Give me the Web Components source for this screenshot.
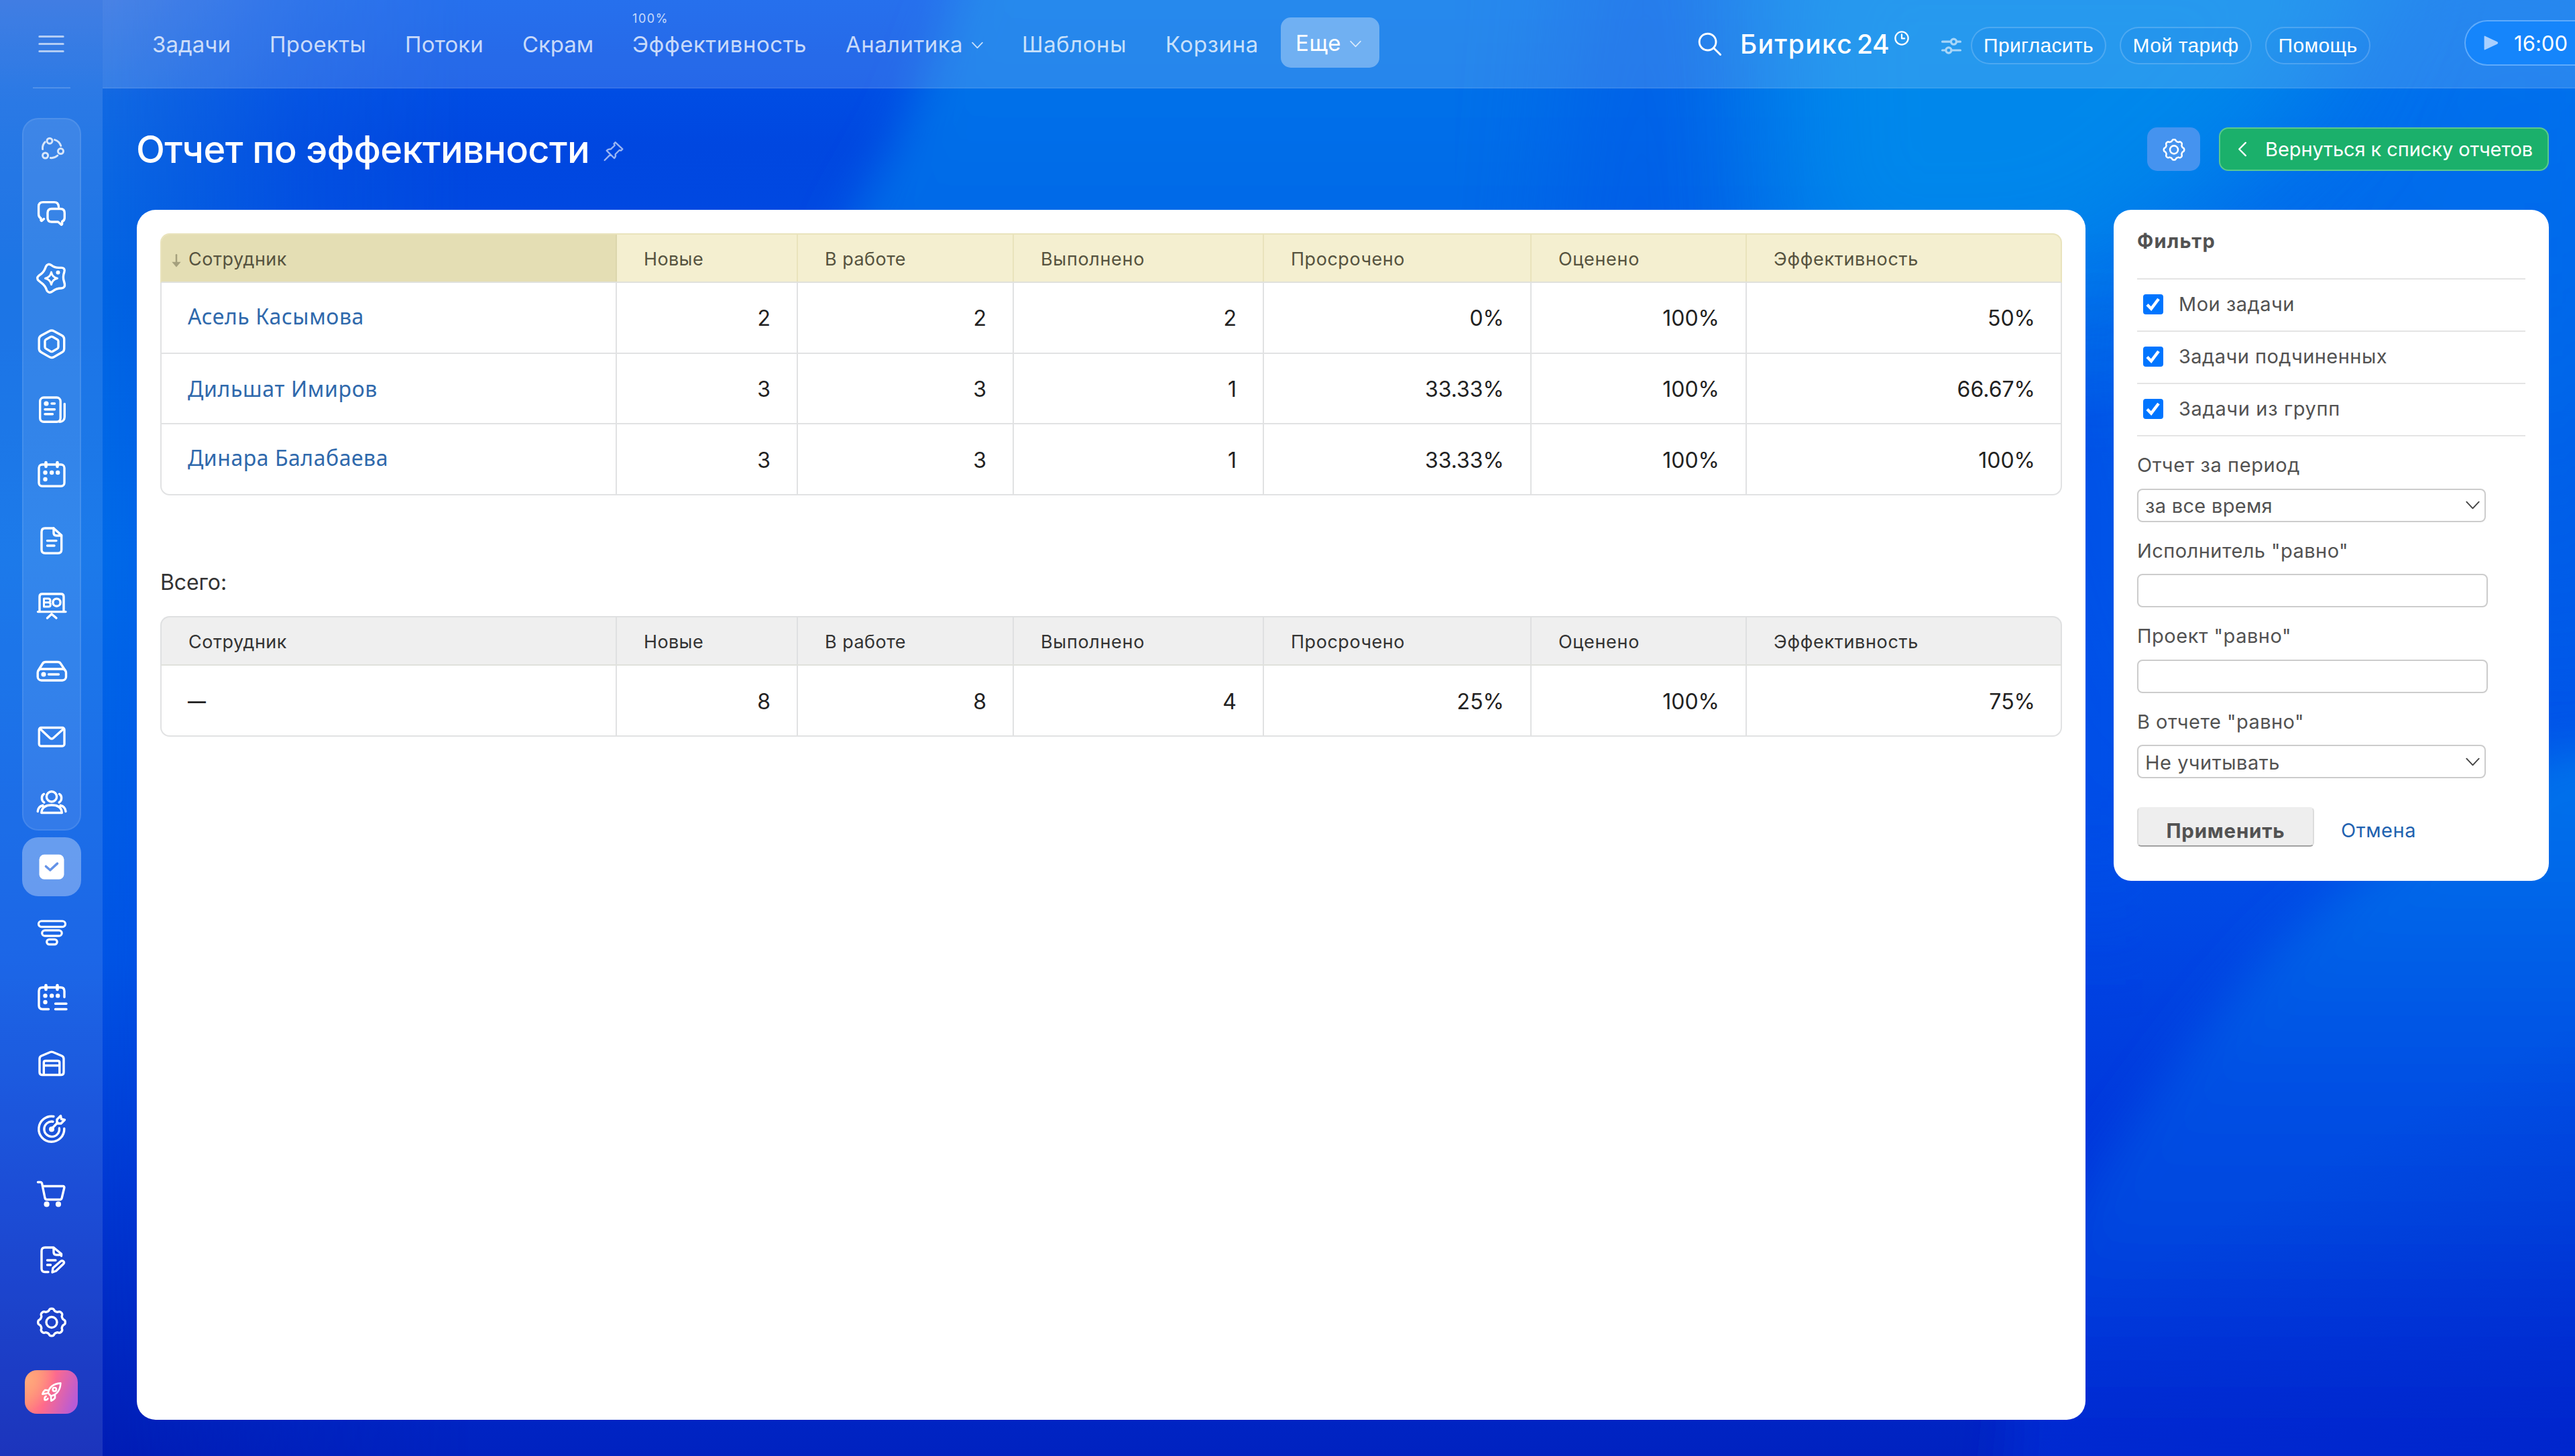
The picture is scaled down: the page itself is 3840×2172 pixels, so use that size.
<!DOCTYPE html>
<html lang="ru">
<head>
<meta charset="utf-8">
<title>Отчет по эффективности</title>
<style>
  html, body { margin: 0; height: 100%; overflow: hidden; }

  body {
    font-family: Inter, "Liberation Sans", sans-serif;
    background: #0048e0;
  }
</style>
</head>
<body>

<app-shell>
  <side-bar slot="side"></side-bar>
  <top-bar slot="top"></top-bar>
  <page-title slot="title">Отчет по эффективности</page-title>

  <report-card slot="main">
    <report-table id="main-table" sorted></report-table>
    <fit-text class="total" w="99">Всего:</fit-text>
    <report-table id="total-table"></report-table>
  </report-card>

  <filter-card slot="filter">
    <filter-check w="173">Мои задачи</filter-check>
    <filter-check w="311">Задачи подчиненных</filter-check>
    <filter-check w="241">Задачи из групп</filter-check>
    <filter-field slot="fields" label="Отчет за период" w="243" value="за все время" vw="190"></filter-field>
    <filter-field slot="fields" label='Исполнитель "равно"' w="315"></filter-field>
    <filter-field slot="fields" label='Проект "равно"' w="230"></filter-field>
    <filter-field slot="fields" label='В отчете "равно"' w="249" value="Не учитывать" vw="201"></filter-field>
  </filter-card>
</app-shell>

<script>
// Closed outline of an eight-toothed cog
function cogPath (cx, cy, r, depth) {
  let d = "";
  for (let i = 0; i < 160; i++) {
    const a  = i / 160 * Math.PI * 2;
    const rr = r + depth * Math.tanh(1.6 * Math.cos(8 * a));
    d += (i ? "L" : "M") + (cx + rr * Math.sin(a)).toFixed(2) + " " + (cy - rr * Math.cos(a)).toFixed(2);
  }
  return d + "Z";
}

const dot = (x, y, r=3.2) => `<ellipse cx="${x}" cy="${y}" rx="${r}" ry="${r}" fill="currentColor" stroke="none"/>`;

const icons = {
  loop: `<g stroke-width="3"><circle cx="21" cy="13.2" r="4"/><circle cx="37.5" cy="28.6" r="4"/><circle cx="14.6" cy="35" r="4"/>
    <path d="M10.6 25.6C10 21 11.3 17.6 14.2 14.8M28.6 11.6C33 12.8 36.2 16 37.8 20.6M22.4 38.6C26.4 39 29.8 37.8 32.8 35"/></g>`,
  chat: `<path d="M34.5 14.5C34.2 10 32 7.6 28 7.6H11C6.8 7.6 4.6 10 4.6 14V25.5C4.6 28.5 5.6 30.5 8 31.5V34.5C8 35.5 9 35.8 9.7 35.1L12.5 32.6"/>
    <path d="M24 17.5H37C41 17.5 43.3 19.6 43.3 23.5V31C43.3 33.8 42 35.6 39.6 36.4V40.2C39.6 41.2 38.6 41.5 37.9 40.8L33.6 37H24C20 37 18 35 18 31V23.5C18 19.6 20 17.5 24 17.5Z"/>`,
  spark: `<path d="M15.5 6.5C17 3 20.5 2.2 23.5 4.6C27 7.8 30 8.6 36 8.4H38.6C42.6 8.4 44.2 11.5 42.8 15C41.2 19.5 40.8 24 42.4 28.5L43.4 32.5C44.2 36.5 42 39 38.5 39C33 39 29.5 40 25.8 43.3C22 46.6 18 45.4 16.5 41.5C15 37 13 34.2 9 31.2L4.5 27.5C2.2 25.5 2.2 22.5 4.4 20.7L9 17.2C13 14 14 11 15.5 6.5Z"/>
    <path d="M23.5 15C24.5 20.5 27 23 32.5 24.2C27 25.4 24.5 28 23.5 33.5C22.5 28 20 25.4 14.5 24.2C20 23 22.5 20.5 23.5 15Z" stroke-width="3"/>${dot(33.5, 15.4, 3)}`,
  hexagon: `<path d="M20.5 5C22.7 3.7 25.3 3.7 27.5 5L39.5 11.6C41.6 12.8 42.7 14.6 42.7 17V31.2C42.7 33.6 41.6 35.4 39.5 36.6L27.5 43.4C25.3 44.7 22.7 44.7 20.5 43.4L8.5 36.6C6.4 35.4 5.2 33.6 5.2 31.2V17C5.2 14.6 6.4 12.8 8.5 11.6Z"/>
    <path d="M22.5 13.5Q24 12.7 25.5 13.5L32.5 17.4Q34 18.3 34 20V28.5Q34 30.2 32.5 31.1L25.5 35.2Q24 36 22.5 35.2L15.5 31.1Q14 30.2 14 28.5V20Q14 18.3 15.5 17.4Z"/>`,
  news: `<rect x="6.7" y="6" width="30.5" height="36.3" rx="5.5"/><path d="M43.3 15.5V35C43.3 39.5 40 42.3 36 42.3M24 15H28.5M14 23.8H28.5M14 30.8H25.5"/>${dot(16, 15, 3.6)}`,
  calendar: `<rect x="5" y="9" width="38" height="32.3" rx="5"/><path d="M15.5 6V12M32.5 6V12" stroke-width="4.6"/>${dot(14.5, 21)}${dot(24.2, 21)}${dot(33.2, 21)}${dot(14.5, 31)}`,
  doc: `<path d="M14 6H27L38.7 16.5V38Q38.7 43.3 33.5 43.3H14.5Q9 43.3 9 38V11.5Q9 6 14 6Z"/><path d="M27 6V13Q27 17 31 17H38.5M17.5 24.6H31M17.5 32H28"/>`,
  board: `<path d="M6 33V11Q6 7 10 7H38Q42 7 42 11V33M3.5 33.6H45M17.5 43L24 37L31 43"/><path d="M12.500 14H19Q22 14 22 17Q22 19.5 19.5 19.8Q22.300 20 22.300 23Q22.300 26 19.500 26H12.500ZM12.500 19.800H20" stroke-width="3"/><circle cx="31.5" cy="19.7" r="5.6"/>`,
  drive: `<rect x="3.2" y="21" width="42.3" height="17" rx="5.5"/><path d="M4 23.5L10.5 13Q12 10.5 15 10.5H33Q36 10.5 37.5 13L44.5 23.5M19.5 29H34.5"/>${dot(12, 29, 3.6)}`,
  mail: `<rect x="5.3" y="10.5" width="37.7" height="27.5" rx="3"/><path d="M6.5 12L21.5 26Q24 28.2 26.5 26L42 12"/>`,
  people: `<circle cx="24" cy="16.4" r="7.6"/><path d="M8.8 40.5C9.3 32.5 14.5 29 24 29S38.8 32.5 39.3 40.5ZM12.5 12.5C8.5 14.5 8 22 12.8 25M35.5 12.5C39.5 14.5 40 22 35.2 25M3.2 38.5C3.6 33.5 6.5 30.5 11 29.5M45 38.5C44.5 33.5 41.5 30.5 37 29.5"/>`,
  tasks: `<rect x="5.5" y="5.7" width="37" height="37" rx="7.5" fill="currentColor" stroke="none"/><path d="M15.5 23.5L21.8 29L32.5 19.2" stroke="#6493e8" stroke-width="3.6"/>`,
  filter: `<g stroke-width="3.2"><rect x="4.5" y="7" width="40" height="8.6" rx="4.3"/><rect x="9.7" y="20.8" width="29.5" height="8.4" rx="4.2"/><rect x="16.7" y="34.300" width="15.5" height="7.6" rx="3.8"/></g>`,
  schedule: `<path d="M19.5 41.5H10.5Q5 41.5 5 36V14.5Q5 9 10.5 9H37.5Q43 9 43 14.5V23.5M29.5 33.2H46M29.5 41.5H46"/><path d="M15.5 6V12M32.5 6V12" stroke-width="4.6"/>${dot(14.5, 21.4)}${dot(24.2, 21.4)}${dot(33.2, 21.4)}${dot(14.5, 31)}`,
  warehouse: `<path d="M6 17.500Q6 14.200 9 13L22 7.500Q24 6.700 26 7.500L39 13Q42 14.200 42 17.500V37.500Q42 41.500 38.500 41.500H9.500Q6 41.500 6 37.500ZM12.300 41V23Q12.300 20.500 15 20.500H33Q35.800 20.500 35.800 23V41M12.300 27.500H35.800"/>`,
  target: `<path d="M27 5.5A19 19 0 1 0 42.8 23.5M26 13.2A11.3 11.3 0 1 0 35.4 23M24 24L33 14.5M32 10L37.5 4.5L38.5 9.5L43.5 10.5L38 16H32Z"/>${dot(24, 24.5, 4)}`,
  cart: `<path d="M3.5 6.5H7.5Q9 6.5 9.5 8L14 30Q14.6 32.5 17 32.5H36.5Q38.5 32.5 39.2 30L42.8 15Q43.2 12.5 41 12.5H10.5"/>${dot(16.6, 39.4, 4.1)}${dot(34, 39.4, 4.1)}`,
  sign: `<path d="M19 42.5H14Q9 42.5 9 37.5V11Q9 6 14 6H27L38.5 15.5V18.5M27 6V13Q27 17 31 17H38M17.5 25H30M17.5 32H22.5M25 43L26 36.5L37.5 26.5Q39.5 25 41.5 26.5Q43.5 28.5 41.5 30.5L30.5 41Z"/>`,
  gear: `<path d="${cogPath(24, 24.5, 18.7, 1.7)}"/><circle cx="24" cy="24.5" r="8"/>`,
  rocket: `<g stroke-width="4"><path d="M16 27C18 15 27 6.5 44 5C43.5 21 35 31 22.5 34ZM16.5 21L9 20.5Q4 25 3.5 29.5L13 28M31.5 31V38Q27.5 43 23 44.5L22.5 35M11.5 34.5C8 36 8 40 8.5 42.5C12 43 14.5 42 15.5 39.5"/><circle cx="30.5" cy="19" r="4"/></g>`,
  burger: `<path d="M8 14H40M8 24H40M8 34H40"/>`,
  search: `<circle cx="20" cy="20" r="17"/><path d="M32.500 32.500L46 46"/>`,
  clock: `<circle cx="24" cy="24" r="21"/><path d="M24 12V25H33"/>`,
  sliders: `<path d="M1 14H22M38 14H47M1 36H9M26 36H47"/><circle cx="30" cy="14" r="7"/><circle cx="17" cy="36" r="7"/>`,
  play: `<path d="M5 4L43 22Q46 24 43 26L5 44Z" fill="currentColor"/>`,
  down: `<path d="M3 13L24 35L45 13"/>`,
  back: `<path d="M33 4L13 24L33 44"/>`,
  pin: `<path d="M28 5L44 20L40.5 23.5L37 22.5L28 31.5C29 35 28 38.5 25.5 40.5L8.5 23.5C11 20.5 14.5 20 17.5 20.5L26.5 12L25 8ZM17 32L4 45"/>`,
  sort: `<path d="M24 3V34" stroke-width="6"/><path d="M8 28H40L24 47Z" fill="currentColor" stroke="none"/>`,
};

class UiIcon extends HTMLElement {
  connectedCallback () {
    const width = this.getAttribute("stroke") || 3.4;
    this.attachShadow({mode: "open"}).innerHTML = `
      <style>
        :host { display: block; flex: none; width: 48px; height: 48px; }
        svg { display: block; width: 100%; height: 100%; overflow: visible; }
      </style>
      <svg viewBox="0 0 48 48" fill="none" stroke="currentColor" stroke-width="${width}"
        stroke-linecap="round" stroke-linejoin="round">${icons[this.getAttribute("name")]}</svg>`;
  }
}

// One line of text, tracked so that it takes up exactly `w` pixels
class FitText extends HTMLElement {
  connectedCallback () {
    this.attachShadow({mode: "open"}).innerHTML = `
      <style>
        :host { display: block; flex: none; white-space: nowrap; }
        span { display: inline-block; }
      </style>
      <span><slot></slot></span>`;

    const width = Number(this.getAttribute("w"));
    if (!width)
      return;

    const span = this.shadowRoot.querySelector("span");
    const gap  = (width - span.getBoundingClientRect().width) / this.textContent.length;
    span.style.letterSpacing = gap.toFixed(3) + "px";
  }
}

class AppShell extends HTMLElement {
  connectedCallback () {
    this.attachShadow({mode: "open"}).innerHTML = `
      <style>
        :host {
          display: grid;
          grid-template-columns: 153px 1fr;
          width: 3840px;
          height: 2172px;
          overflow: hidden;
          position: relative;
          z-index: 0;
        }
        .backdrop, .glow { position: absolute; inset: 0; z-index: -1; }
        .glow {
          right: auto;
          width: 700px;
          background: linear-gradient(#2a6ee0, #1069e2 7%, #0064e2 20%, #006ae8 38%, #0054e4 66%, #0038d2 82%, #001cb4);
          -webkit-mask-image: linear-gradient(to right, #000 150px, #000a 280px, #0004 450px, transparent);
          mask-image: linear-gradient(to right, #000 150px, #000a 280px, #0004 450px, transparent);
        }
        .page { display: flex; flex-direction: column; min-width: 0; }
        .columns { display: flex; align-items: flex-start; gap: 42px; padding-left: 51px; }
      </style>
      <svg class="backdrop" width="3840" height="2172" viewBox="0 0 3840 2172" preserveAspectRatio="none">
        <defs>
          <linearGradient id="base" x1="0" y1="0" x2="0" y2="1">
            <stop offset="0" stop-color="#0057ea"/><stop offset=".1" stop-color="#0047e0"/>
            <stop offset=".45" stop-color="#0050e8"/><stop offset=".6" stop-color="#004ce6"/>
            <stop offset=".8" stop-color="#0034da"/><stop offset="1" stop-color="#0022c0"/>
          </linearGradient>
          <linearGradient id="top" x1="0" y1="0" x2="0" y2="1">
            <stop offset="0" stop-color="#0078ea"/><stop offset="1" stop-color="#0060e6"/>
          </linearGradient>
          <linearGradient id="fold" x1="0" y1="0" x2="0" y2="1">
            <stop offset="0" stop-color="#0074ec"/><stop offset=".2" stop-color="#0064e8"/>
            <stop offset=".4" stop-color="#0051e4"/><stop offset=".6" stop-color="#0046df"/>
            <stop offset=".75" stop-color="#0035d9"/><stop offset=".87" stop-color="#0029d2"/>
          </linearGradient>
          <linearGradient id="rim" x1="0" y1="0" x2="0" y2="1">
            <stop offset="0" stop-color="#0074ee"/><stop offset=".5" stop-color="#0066ea"/>
            <stop offset="1" stop-color="#006aea" stop-opacity=".2"/>
          </linearGradient>
          <linearGradient id="corner" x1=".3" y1="0" x2="1" y2="1">
            <stop offset=".35" stop-color="#0022c8" stop-opacity="0"/><stop offset="1" stop-color="#0022c8" stop-opacity=".55"/>
          </linearGradient>
          <filter id="soft" x="-50%" y="-50%" width="200%" height="200%"><feGaussianBlur stdDeviation="34"/></filter>
          <filter id="softer" x="-50%" y="-50%" width="200%" height="200%"><feGaussianBlur stdDeviation="90"/></filter>
        </defs>
        <rect width="3840" height="2172" fill="url(#base)"/>
        <path d="M1460 -100L1400 60L1350 180L1260 340L1200 600H4000V-100Z" fill="url(#top)" filter="url(#soft)"/>
        <path d="M2380 -200H2540L2560 400L2520 700H2300Z" fill="#0055e6" opacity=".6" filter="url(#softer)"/>
        <path d="M3560 -60L3500 150L3200 320L3140 600L3200 1100H4000V-60Z" fill="url(#rim)" filter="url(#softer)"/>
        <path d="M2640 -160H3560L3440 150L3260 330L3100 440H2660Z" fill="#008cec" opacity=".85" filter="url(#softer)"/>
        <path d="M3090 520H3160V1350H3090Z" fill="#004fe8" opacity=".8" filter="url(#softer)"/>
        <path d="M4000 1120H3800L3640 1235L3502 1318L3390 1414L3313 1498L3245 1582L3177 1672L3119 1751L3020 1940L2980 2300H4000Z" fill="url(#fold)" filter="url(#soft)"/>
        <rect x="3000" y="1500" width="840" height="672" fill="url(#corner)"/>
      </svg>
      <div class="glow"></div>
      <slot name="side"></slot>
      <div class="page">
        <slot name="top"></slot>
        <slot name="title"></slot>
        <div class="columns">
          <slot name="main"></slot>
          <slot name="filter"></slot>
        </div>
      </div>`;
  }
}

class SideBar extends HTMLElement {
  connectedCallback () {
    const item = name => `<div class="item"><ui-icon name="${name}"></ui-icon></div>`;

    this.attachShadow({mode: "open"}).innerHTML = `
      <style>
        :host {
          display: flex;
          flex-direction: column;
          align-items: center;
          color: white;
          background: #ffffff1c;
        }
        .burger { height: 130px; display: grid; place-items: center; opacity: .62; }
        .burger ui-icon { width: 53px; height: 53px; }
        hr { width: 56px; height: 2px; margin: 0 0 44px; border: 0; background: #ffffff2c; }
        .group {
          box-sizing: border-box;
          width: 88px;
          height: 1063px;
          border: 2px solid #ffffff16;
          border-radius: 24px;
          background: #ffffff1a;
        }
        .group > :first-child { height: 86px; margin-bottom: 5px; opacity: .8; }
        .item { height: 97.6px; display: grid; place-items: center; }
        .group, .active { flex: none; }
        .active {
          width: 88px;
          height: 88px;
          margin: 10px 0 5px;
          border-radius: 24px;
          background: #ffffff55;
        }
        .rocket {
          width: 79px;
          height: 65px;
          margin-top: 28px;
          display: grid;
          place-items: center;
          border-radius: 18px;
          background: radial-gradient(circle at 0 20%, #ffab7c, transparent 50%),
            linear-gradient(110deg, #ff8878 20%, #ff6b8b 45%, #b85bd6 90%);
        }
        .rocket ui-icon { width: 32px; height: 32px; }
      </style>
      <div class="burger"><ui-icon name="burger" stroke="2.8"></ui-icon></div>
      <hr>
      <div class="group">${["loop", "chat", "spark", "hexagon", "news", "calendar", "doc", "board", "drive", "mail", "people"].map(item).join("")}</div>
      <div class="item active"><ui-icon name="tasks"></ui-icon></div>
      ${["filter", "schedule", "warehouse", "target", "cart", "sign"].map(item).join("")}
      <div class="item" style="height: 88px"><ui-icon name="gear"></ui-icon></div>
      <div class="rocket"><ui-icon name="rocket"></ui-icon></div>`;
  }
}

class TopBar extends HTMLElement {
  connectedCallback () {
    this.attachShadow({mode: "open"}).innerHTML = `
      <style>
        :host {
          box-sizing: border-box;
          flex: none;
          height: 132px;
          padding-left: 45px;
          display: flex;
          align-items: center;
          color: white;
          background: #ffffff26;
          border-bottom: 2px solid #ffffff12;
        }
        nav { display: flex; align-items: center; font-size: 33px; color: #ffffffc0; }
        nav > div { position: relative; display: flex; align-items: center; padding: 2px 29px 0; }
        .counter { position: absolute; left: 29px; top: -26px; font-size: 18px; line-height: 20px; }
        nav ui-icon { width: 17px; height: 17px; margin: 2px 0 0 13px; }
        nav > .more {
          height: 73px;
          margin: -4px 0 0 4px;
          padding: 2px 27px 0 22px;
          border-radius: 15px;
          color: white;
          background: #ffffff58;
        }
        .more ui-icon { opacity: .75; }
        .search { width: 35px; height: 35px; margin-left: 475px; }
        .brand { display: flex; margin-left: 28px; font-size: 39px; font-weight: 500; gap: 6px; padding-top: 1px; }
        .clock { width: 22px; height: 22px; margin: -16px 49px 0 8px; }
        .sliders { width: 28px; height: 28px; margin: 6px 15px 0 0; opacity: .6; }
        .pill {
          box-sizing: border-box;
          height: 56px;
          margin: 6px 20px 0 0;
          display: grid;
          place-items: center;
          border: 2px solid #ffffff30;
          border-radius: 28px;
          font: 30px "Liberation Sans", sans-serif;
          background: #2080ea22;
        }
        .timer {
          box-sizing: border-box;
          flex: none;
          width: 210px;
          height: 68px;
          margin: -2px -60px 0 120px;
          padding-left: 26px;
          display: flex;
          align-items: center;
          gap: 23px;
          border: 2px solid #ffffff50;
          border-radius: 34px;
          font-size: 31px;
          background: #1585fb;
        }
        .timer ui-icon { width: 23px; height: 26px; color: #a9d0ff; }
      </style>
      <nav>
        <div><fit-text w="117">Задачи</fit-text></div>
        <div><fit-text w="144">Проекты</fit-text></div>
        <div><fit-text w="117">Потоки</fit-text></div>
        <div><fit-text w="106">Скрам</fit-text></div>
        <div><fit-text class="counter" w="54">100%</fit-text><fit-text w="260">Эффективность</fit-text></div>
        <div><fit-text w="175">Аналитика</fit-text><ui-icon name="down" stroke="5"></ui-icon></div>
        <div><fit-text w="156">Шаблоны</fit-text></div>
        <div><fit-text w="139">Корзина</fit-text></div>
        <div class="more"><fit-text w="68">Еще</fit-text><ui-icon name="down" stroke="4.5"></ui-icon></div>
      </nav>
      <ui-icon class="search" name="search" stroke="4"></ui-icon>
      <div class="brand"><fit-text w="168">Битрикс</fit-text><fit-text w="48">24</fit-text></div>
      <ui-icon class="clock" name="clock" stroke="5"></ui-icon>
      <ui-icon class="sliders" name="sliders" stroke="5.5"></ui-icon>
      <div class="pill" style="width: 202px"><fit-text w="164">Пригласить</fit-text></div>
      <div class="pill" style="width: 197px"><fit-text w="158">Мой тариф</fit-text></div>
      <div class="pill" style="width: 157px"><fit-text w="118">Помощь</fit-text></div>
      <div class="timer"><ui-icon name="play"></ui-icon><fit-text w="80">16:00</fit-text></div>`;
  }
}

class PageTitle extends HTMLElement {
  connectedCallback () {
    this.attachShadow({mode: "open"}).innerHTML = `
      <style>
        :host {
          flex: none;
          box-sizing: border-box;
          height: 181px;
          padding: 0 39px 0 50px;
          display: flex;
          align-items: center;
          color: white;
        }
        h1 { margin: 0 20px 0 0; font-size: 56px; line-height: 70px; font-weight: 500; }
        .pin { width: 32px; height: 32px; margin: 5px auto 0 0; color: #ffffff99; }
        .settings {
          width: 79px;
          height: 65px;
          margin-right: 28px;
          display: grid;
          place-items: center;
          border-radius: 15px;
          background: #4593ef;
        }
        .settings ui-icon { width: 36px; height: 36px; }
        .back {
          box-sizing: border-box;
          width: 492px;
          height: 65px;
          padding-left: 22px;
          display: flex;
          align-items: center;
          border: 2px solid #5ac98d;
          border-radius: 14px;
          font-size: 29px;
          background: #1bb06b;
        }
        .back ui-icon { width: 23px; height: 23px; margin-right: 22px; }
      </style>
      <h1></h1>
      <ui-icon class="pin" name="pin" stroke="3.6"></ui-icon>
      <div class="settings"><ui-icon name="gear" stroke="3.4"></ui-icon></div>
      <div class="back"><ui-icon name="back" stroke="5"></ui-icon><fit-text w="399">Вернуться к списку отчетов</fit-text></div>`;
    this.shadowRoot.querySelector("h1").innerHTML = `<fit-text w="676">${this.textContent}</fit-text>`;
  }
}

class ReportCard extends HTMLElement {
  connectedCallback () {
    this.attachShadow({mode: "open"}).innerHTML = `
      <style>
        :host {
          display: block;
          flex: none;
          box-sizing: border-box;
          width: 2906px;
          height: 1805px;
          padding: 35px;
          border-radius: 28px;
          color: #333;
          background: white;
        }
        ::slotted(.total) { height: 101px; padding-top: 79px; line-height: 101px; font-size: 32px; }
      </style>
      <slot></slot>`;
  }
}

const columns = [
  ["Сотрудник", 147], ["Новые", 89], ["В работе", 121], ["Выполнено", 155],
  ["Просрочено", 170], ["Оценено", 121], ["Эффективность", 216],
];

class ReportTable extends HTMLElement {
  connectedCallback () {
    this.attachShadow({mode: "open"}).innerHTML = `
      <style>
        :host { display: block; --line: #e1e2e3; --head: #efefef; --head-line: #dfe0e1; --ink: #333; }
        :host([sorted]) { --head: #f4efd0; --head-line: #e9e3bc; --ink: #56533f; }
        .row {
          display: grid;
          grid-template-columns: 679px 270px 322px 373px 399px 321px 468px;
          height: 103.7px;
          border-bottom: 2px solid var(--line);
        }
        .cell {
          display: flex;
          align-items: center;
          justify-content: flex-end;
          padding: 2px 39px 0 40px;
          border-right: 2px solid var(--line);
          font-size: 32px;
          color: #222;
        }
        .cell:last-child { border-right: 0; padding-right: 38px; }
        .cell:first-child { justify-content: flex-start; padding-left: 39px; }
        .head {
          height: 70px;
          border: 2px solid var(--head-line);
          border-bottom-color: #e0e1dc;
          border-radius: 14px 14px 0 0;
          background: var(--head);
        }
        .head .cell { justify-content: flex-start; font-size: 27px; color: var(--ink); border-color: var(--head-line); }
        .head .cell:first-child { padding-left: 40px; }
        .body { border: solid var(--line); border-width: 0 2px 2px; border-radius: 0 0 14px 14px; }
        .body .row:last-child { border-bottom: 0; height: 104px; }
        :host([sorted]) .head .cell:first-child { background: #e4deb4; border-color: #dcd6ac; padding-left: 12px; border-top-left-radius: 12px; }
        .head ui-icon { width: 20px; height: 20px; margin: 5px 8px 0 0; color: #a5a07d; }
        a {
          font: 32px "Noto Sans", sans-serif;
          line-height: 60px;
          color: #2f69ac;
          margin-bottom: var(--up, 0);
        }
        .dash { font-size: 27px; font-weight: 600; }
      </style>
      <div class="row head"></div>
      <div class="body"></div>`;

    const sorted = this.hasAttribute("sorted");
    this.shadowRoot.querySelector(".head").innerHTML = columns.map(([name, w], i) =>
      `<div class="cell">${sorted && !i ? `<ui-icon name="sort"></ui-icon>` : ""}<fit-text w="${w}">${name}</fit-text></div>`
    ).join("");
  }

  set rows (rows) {
    this.shadowRoot.querySelector(".body").innerHTML = rows.map(([name, ...values]) => `
      <div class="row">
        <div class="cell">${name}</div>
        ${values.map(v => `<div class="cell">${v}</div>`).join("")}
      </div>`).join("");
  }
}

class FilterCard extends HTMLElement {
  connectedCallback () {
    this.attachShadow({mode: "open"}).innerHTML = `
      <style>
        :host {
          display: block;
          flex: none;
          box-sizing: border-box;
          width: 649px;
          height: 1001px;
          padding: 0 35px;
          border-radius: 26px;
          color: #525252;
          font-size: 29px;
          background: white;
        }
        h2 { margin: 0; height: 102px; font-size: 29px; line-height: 94px; font-weight: 700; }
        .checks { border-bottom: 2px solid #e4e4e4; }
        .actions { display: flex; align-items: center; gap: 40px; margin-top: 43px; }
        .apply {
          box-sizing: border-box;
          width: 264px;
          height: 59px;
          padding-top: 10px;
          display: grid;
          place-items: center;
          border: 2px solid #dcdcdc;
          border-top-color: #eee;
          border-bottom-color: #a0a0a0;
          border-radius: 6px;
          font-size: 29.5px;
          font-weight: 700;
          background: #eee;
        }
        .cancel { padding-top: 9px; color: #1f62b0; }
      </style>
      <h2><fit-text w="117">Фильтр</fit-text></h2>
      <div class="checks"><slot></slot></div>
      <slot name="fields"></slot>
      <div class="actions">
        <div class="apply"><fit-text w="177">Применить</fit-text></div>
        <fit-text class="cancel" w="112">Отмена</fit-text>
      </div>`;
  }
}

class FilterCheck extends HTMLElement {
  connectedCallback () {
    this.attachShadow({mode: "open"}).innerHTML = `
      <style>
        :host {
          box-sizing: border-box;
          display: flex;
          align-items: center;
          height: 78px;
          padding: 0 0 3px 9px;
          gap: 23px;
          border-top: 2px solid #e4e4e4;
        }
        .box {
          width: 30px;
          height: 30px;
          display: grid;
          place-items: center;
          border-radius: 4px;
          background: #0075ff;
          color: white;
        }
      </style>
      <span class="box"><svg width="24" height="24" viewBox="0 0 24 24" fill="none" stroke="white" stroke-width="4.5"><path d="M3 12.5L9 18.5L20 4"/></svg></span>
      <fit-text w="${this.getAttribute("w")}">${this.textContent}</fit-text>`;
  }
}

class FilterField extends HTMLElement {
  connectedCallback () {
    const value = this.getAttribute("value");

    this.attachShadow({mode: "open"}).innerHTML = `
      <style>
        :host { display: block; }
        .label { height: 69.6px; padding-top: 8px; line-height: 69px; }
        .control {
          box-sizing: border-box;
          width: ${value ? 520 : 523}px;
          height: 50px;
          padding: 2px 7px 0 10px;
          display: flex;
          align-items: center;
          justify-content: space-between;
          border: 2px solid #ccc;
          border-radius: 8px;
        }
        ui-icon { width: 21px; height: 21px; margin-top: -2px; color: #444; }
      </style>
      <fit-text class="label" w="${this.getAttribute("w")}">${this.getAttribute("label")}</fit-text>
      <div class="control">${value ? `<fit-text w="${this.getAttribute("vw")}">${value}</fit-text><ui-icon name="down" stroke="4.5"></ui-icon>` : ""}</div>`;
  }
}

customElements.define("ui-icon", UiIcon);
customElements.define("app-shell", AppShell);
customElements.define("report-card", ReportCard);
customElements.define("filter-card", FilterCard);
customElements.define("side-bar", SideBar);
customElements.define("top-bar", TopBar);
customElements.define("page-title", PageTitle);
customElements.define("report-table", ReportTable);
customElements.define("filter-check", FilterCheck);
customElements.define("filter-field", FilterField);

document.getElementById("main-table").rows = [
  [`<a style="--up: 5px"><fit-text w="263">Асель Касымова</fit-text></a>`, "2", "2", "2", "0%", "100%", "50%"],
  [`<a style="--up: 1px"><fit-text w="283">Дильшат Имиров</fit-text></a>`, "3", "3", "1", "33.33%", "100%", "66.67%"],
  [`<a style="--up: 7px"><fit-text w="299">Динара Балабаева</fit-text></a>`, "3", "3", "1", "33.33%", "100%", "100%"],
];

document.getElementById("total-table").rows = [
  [`<fit-text class="dash">—</fit-text>`, "8", "8", "4", "25%", "100%", "75%"],
];

// Last, so that every label is in its final place and font when it is measured
customElements.define("fit-text", FitText);
</script>
</body>
</html>
